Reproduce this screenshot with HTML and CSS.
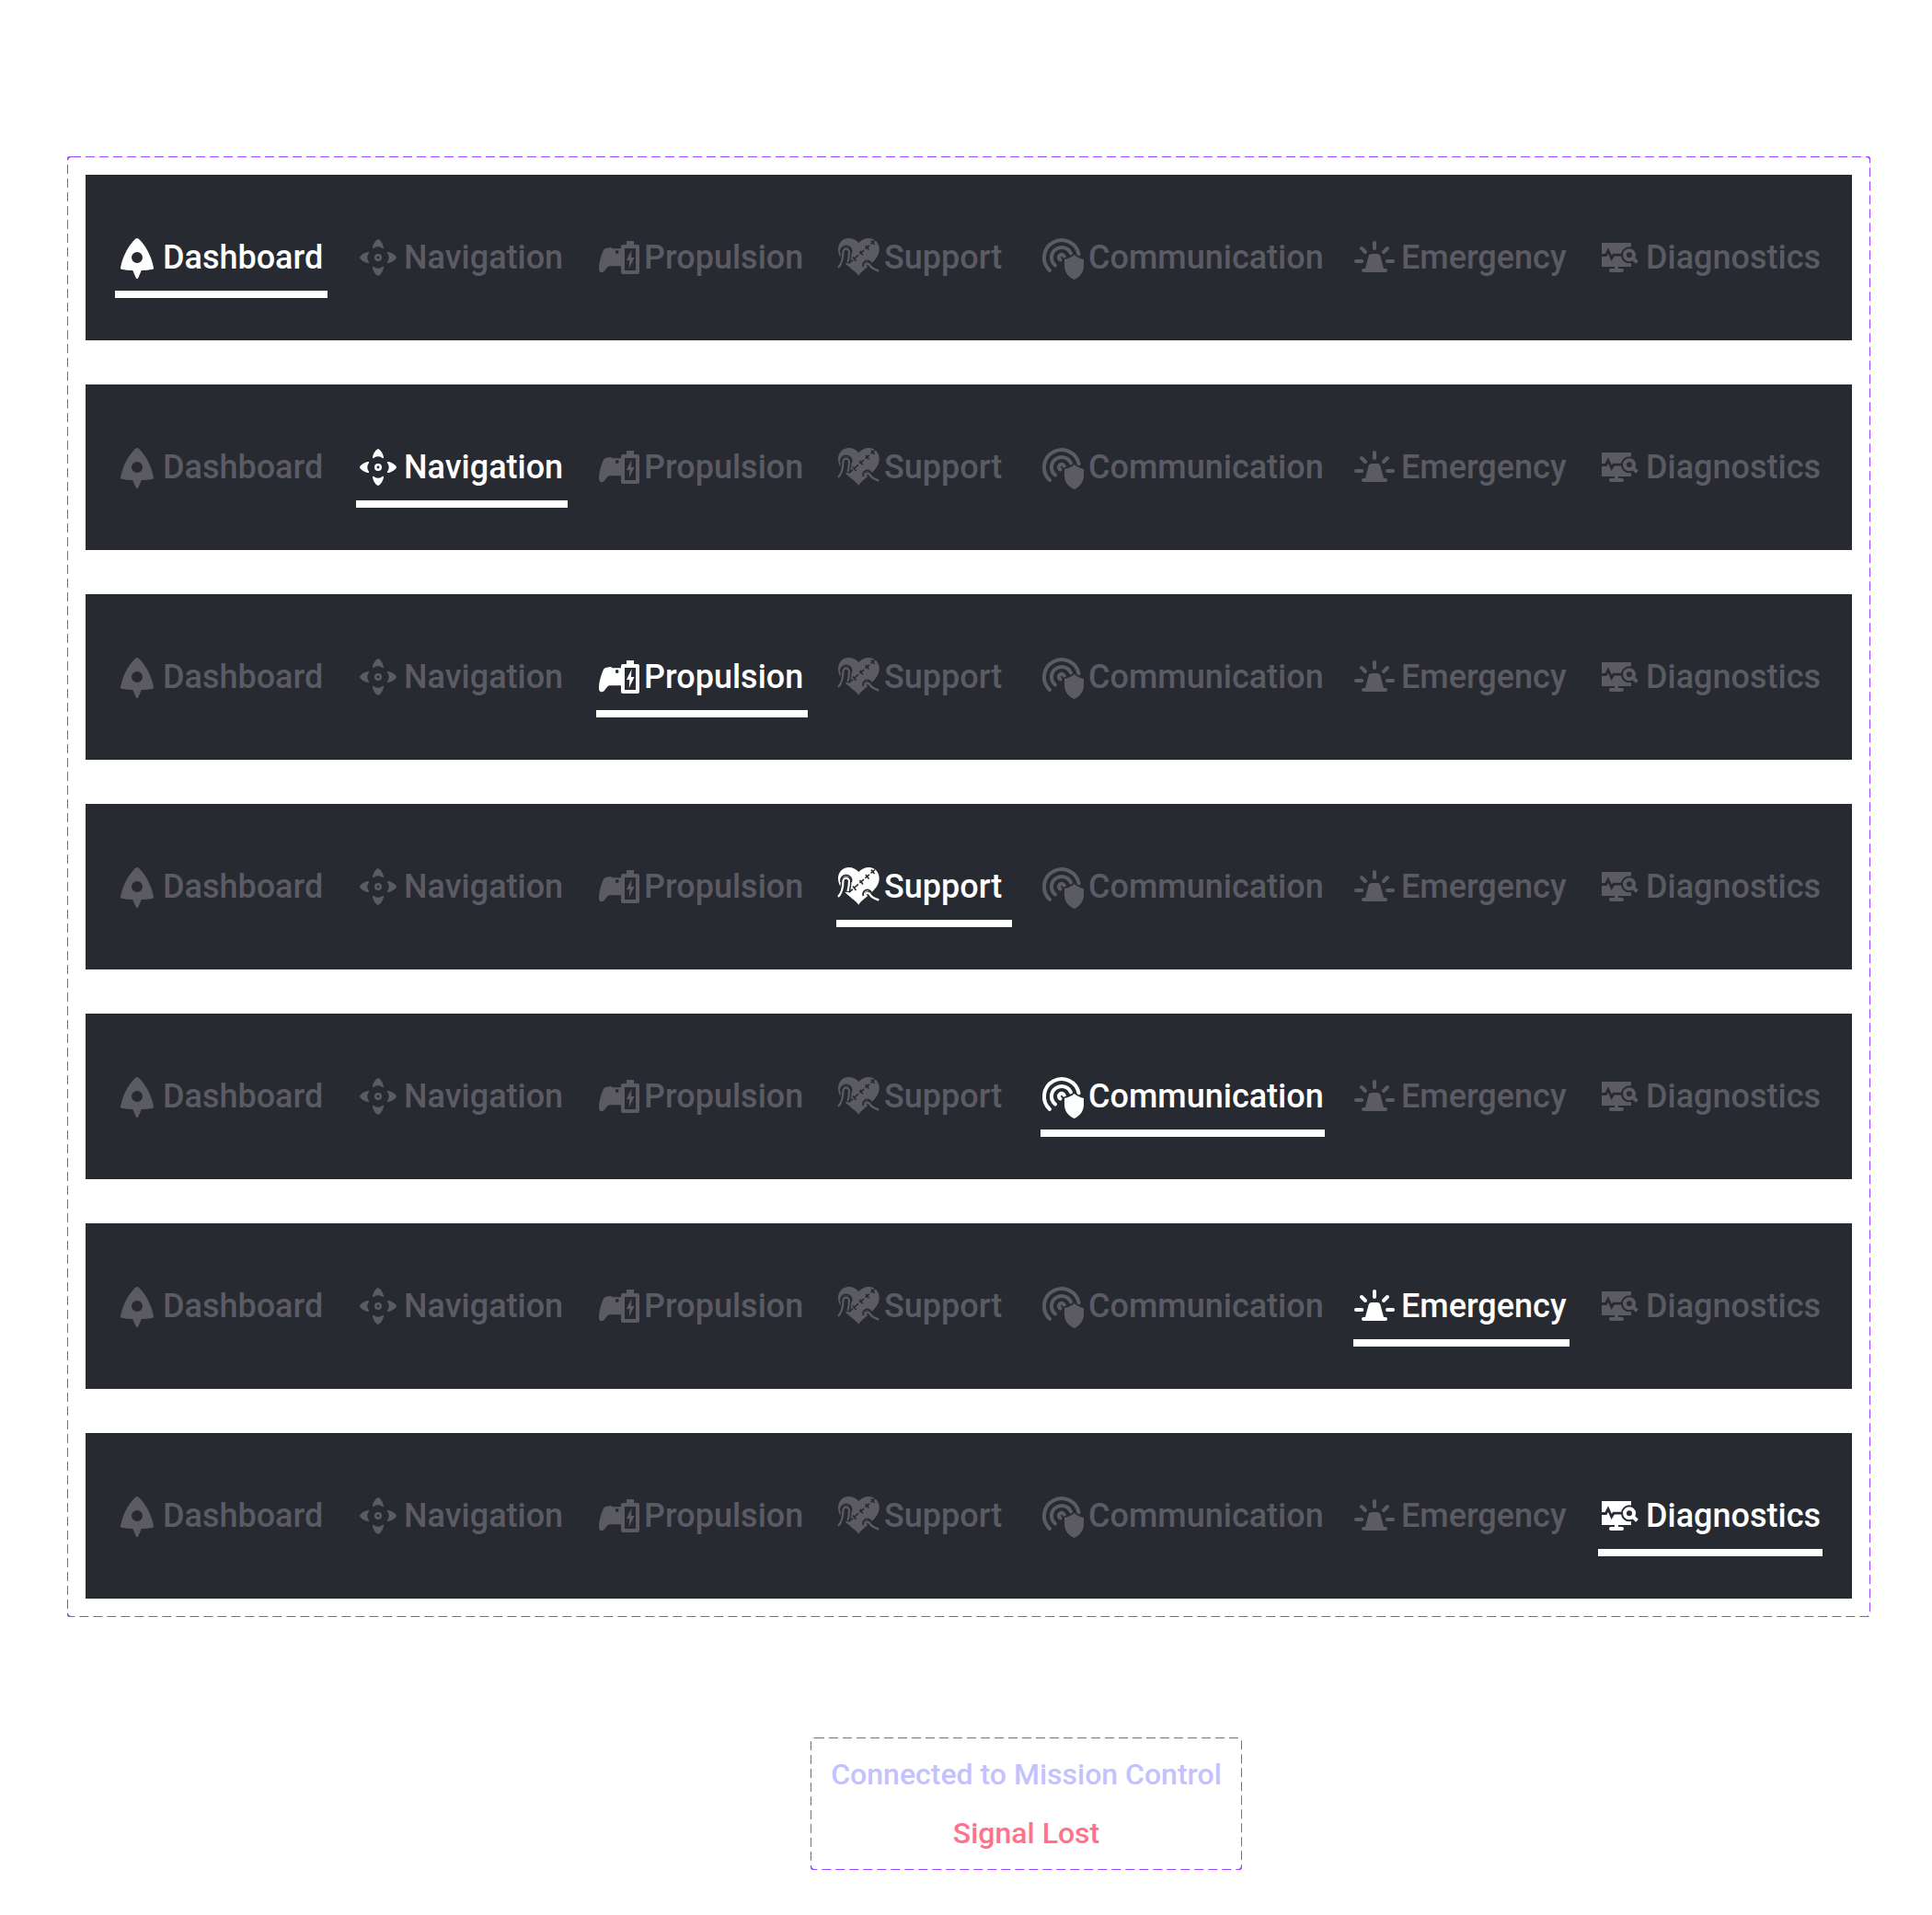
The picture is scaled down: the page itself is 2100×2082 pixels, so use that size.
FILE: index.html
```html
<!DOCTYPE html>
<html lang="en">
<head>
  <meta charset="UTF-8" />
  <meta name="viewport" content="width=device-width, initial-scale=1.0" />
  <title>Mission Control</title>
  <link rel="stylesheet" href="styles.css">
</head>
<body>
  <!-- Icon sprite -->
  <svg class="sprite" aria-hidden="true">
    <symbol id="i-dashboard" viewBox="0 0 48 48">
      <path fill-rule="evenodd" d="M22.5 3.6Q24 2.4 25.5 3.6C33 10.5 39.5 22 42 35.3Q42.2 36.5 41 36.7Q35 37.9 28.7 37.9L25.2 46.2Q24 48 22.8 46.2L19.3 37.9Q13 37.9 7 36.7Q5.8 36.5 6 35.3C8.5 22 15 10.5 22.5 3.6ZM24 18a6 6 0 1 0 0 12a6 6 0 1 0 0-12Z"/>
    </symbol>
    <symbol id="i-navigation" viewBox="0 0 48 48">
      <path id="arrow" d="M24 4C26.5 4.5 29.5 9.5 30 13C30 14.5 29 14.5 28 13.5Q26.5 12.3 24 12.3Q21.5 12.3 20 13.5C19 14.5 18 14.5 18 13C18.5 9.5 21.5 4.5 24 4Z"/>
      <use href="#arrow" transform="rotate(90 24 24)"/>
      <use href="#arrow" transform="rotate(180 24 24)"/>
      <use href="#arrow" transform="rotate(270 24 24)"/>
      <circle class="line" cx="24" cy="24" r="2.7" stroke-width="2.6"/>
    </symbol>
    <symbol id="i-propulsion" viewBox="0 0 48 48">
      <path d="M10 14L15.5 13Q16.5 13 17.5 14.3H27V33.3H15Q13.5 33.3 12.5 34.3L8.5 39.3Q6.5 41 4.5 40Q2.8 39 3 34.5Q3.5 27 7 18Q8 15 10 14Z"/>
      <circle class="cut-fill" cx="22.7" cy="18" r="1.9"/>
      <path fill-rule="evenodd" d="M33 6H41V10H45Q47 10 47 12V40Q47 42 45 42H29Q27 42 27 40V12Q27 10 29 10H33ZM31 14V38H43V14Z"/>
      <path d="M38.5 15.5L33 27H36.3L35.7 36L41.5 24H38Z"/>
    </symbol>
    <symbol id="i-support" viewBox="0 0 48 48">
      <path d="M24.3 43.7C20 37 2 29 2 15C2 8 7 3 13.5 3C18 3 22 5 24.3 8C27 5 31 3 35.5 3C42 3 46.7 8 46.7 15C46.7 28 29 36 24.3 43.7Z"/>
      <!-- stitches -->
      <path class="cut" d="M42 5.5L14 30" stroke-width="1.6" stroke-dasharray="6 2"/>
      <path class="cut" d="M38 5.5L41.5 10M32 11L35.5 15.5M25.5 17L29 21.5M18 23.5L21.5 28" stroke-width="1.6"/>
      <!-- left tube -->
      <path class="cut" d="M1 34C6 29 7.4 22 7.4 18A3.3 3.3 0 0 1 14 18C14 22 13.5 25 12.5 30" stroke-width="5"/>
      <path class="cut" d="M5 19A6 6 0 1 1 16.5 19" stroke-width="1.6"/>
      <path class="cut-fill" d="M8 18A3 3 0 0 1 13.5 18L12 29L4 33Z"/>
      <path class="line" d="M2 35C7 30 7.4 22 7.4 18A3.3 3.3 0 0 1 14 18C14 22 13.5 25 12.5 29" stroke-width="2.2"/>
      <!-- right tube -->
      <path class="cut" d="M29.5 34A4.6 4.6 0 1 1 38 30.5" stroke-width="1.8"/>
      <path class="cut" d="M33 33C34 31.5 36 31.5 37.5 33.5L46.3 38.5" stroke-width="6"/>
      <path class="line" d="M31.5 32.5C33 30 36 30.5 37 33C38 35 41.5 37 46.3 38.5" stroke-width="2.4"/>
    </symbol>
    <symbol id="i-communication" viewBox="0 0 48 48">
      <path class="line round" d="M10 38A19 19 0 1 1 41.6 20.5" stroke-width="4"/>
      <path class="line round" d="M16 32.5A11 11 0 1 1 33 19.5" stroke-width="4"/>
      <path class="line round" d="M21.5 26.5A3 3 0 1 1 25.8 23" stroke-width="4"/>
      <path class="halo" d="M36.7 21C39.5 23.5 43 25 47 26V33C47 40 42.5 45.5 36.7 48C30.5 45.5 26 40 26 33V26C30.5 25 34 23.5 36.7 21Z"/>
    </symbol>
    <symbol id="i-emergency" viewBox="0 0 48 48">
      <path d="M20 20H26Q28.5 20 29.3 22.3L33 36H35Q37 36 37 38T35 40H11Q9 40 9 38T11 36H13L16.7 22.3Q17.5 20 20 20Z"/>
      <path class="line round" d="M23 8V14M3 28H9.3M37 28H43M9 14L13 18M37 14L33 18" stroke-width="4"/>
    </symbol>
    <symbol id="i-diagnostics" viewBox="0 0 48 48">
      <path d="M4 8H36V34H22V36H26Q28 36 28 38T26 40H14Q12 40 12 38T14 36H18V34H4Z"/>
      <path class="cut" d="M4 21.5H8.5L11 16.5L14.7 25L17 21.2H27" stroke-width="2.8"/>
      <circle class="cut-fill" cx="34" cy="21.3" r="9"/>
      <path class="cut" d="M34 21.3L42.5 29.3" stroke-width="7"/>
      <path class="line" d="M38 25L42.5 29.3" stroke-width="4"/>
      <circle class="line" cx="34" cy="21.3" r="5" stroke-width="4"/>
    </symbol>
  </svg>

  <main class="frame nav-states">
    <svg class="outline" aria-hidden="true"><rect rx="5"/></svg>

    <nav class="bar">
      <a class="tab active" href="#dashboard"><svg class="icon"><use href="#i-dashboard"/></svg>Dashboard</a>
      <a class="tab" href="#navigation"><svg class="icon"><use href="#i-navigation"/></svg>Navigation</a>
      <a class="tab" href="#propulsion"><svg class="icon"><use href="#i-propulsion"/></svg>Propulsion</a>
      <a class="tab" href="#support"><svg class="icon"><use href="#i-support"/></svg>Support</a>
      <a class="tab" href="#communication"><svg class="icon"><use href="#i-communication"/></svg>Communication</a>
      <a class="tab" href="#emergency"><svg class="icon"><use href="#i-emergency"/></svg>Emergency</a>
      <a class="tab" href="#diagnostics"><svg class="icon"><use href="#i-diagnostics"/></svg>Diagnostics</a>
    </nav>

    <nav class="bar">
      <a class="tab" href="#dashboard"><svg class="icon"><use href="#i-dashboard"/></svg>Dashboard</a>
      <a class="tab active" href="#navigation"><svg class="icon"><use href="#i-navigation"/></svg>Navigation</a>
      <a class="tab" href="#propulsion"><svg class="icon"><use href="#i-propulsion"/></svg>Propulsion</a>
      <a class="tab" href="#support"><svg class="icon"><use href="#i-support"/></svg>Support</a>
      <a class="tab" href="#communication"><svg class="icon"><use href="#i-communication"/></svg>Communication</a>
      <a class="tab" href="#emergency"><svg class="icon"><use href="#i-emergency"/></svg>Emergency</a>
      <a class="tab" href="#diagnostics"><svg class="icon"><use href="#i-diagnostics"/></svg>Diagnostics</a>
    </nav>

    <nav class="bar">
      <a class="tab" href="#dashboard"><svg class="icon"><use href="#i-dashboard"/></svg>Dashboard</a>
      <a class="tab" href="#navigation"><svg class="icon"><use href="#i-navigation"/></svg>Navigation</a>
      <a class="tab active" href="#propulsion"><svg class="icon"><use href="#i-propulsion"/></svg>Propulsion</a>
      <a class="tab" href="#support"><svg class="icon"><use href="#i-support"/></svg>Support</a>
      <a class="tab" href="#communication"><svg class="icon"><use href="#i-communication"/></svg>Communication</a>
      <a class="tab" href="#emergency"><svg class="icon"><use href="#i-emergency"/></svg>Emergency</a>
      <a class="tab" href="#diagnostics"><svg class="icon"><use href="#i-diagnostics"/></svg>Diagnostics</a>
    </nav>

    <nav class="bar">
      <a class="tab" href="#dashboard"><svg class="icon"><use href="#i-dashboard"/></svg>Dashboard</a>
      <a class="tab" href="#navigation"><svg class="icon"><use href="#i-navigation"/></svg>Navigation</a>
      <a class="tab" href="#propulsion"><svg class="icon"><use href="#i-propulsion"/></svg>Propulsion</a>
      <a class="tab active" href="#support"><svg class="icon"><use href="#i-support"/></svg>Support</a>
      <a class="tab" href="#communication"><svg class="icon"><use href="#i-communication"/></svg>Communication</a>
      <a class="tab" href="#emergency"><svg class="icon"><use href="#i-emergency"/></svg>Emergency</a>
      <a class="tab" href="#diagnostics"><svg class="icon"><use href="#i-diagnostics"/></svg>Diagnostics</a>
    </nav>

    <nav class="bar">
      <a class="tab" href="#dashboard"><svg class="icon"><use href="#i-dashboard"/></svg>Dashboard</a>
      <a class="tab" href="#navigation"><svg class="icon"><use href="#i-navigation"/></svg>Navigation</a>
      <a class="tab" href="#propulsion"><svg class="icon"><use href="#i-propulsion"/></svg>Propulsion</a>
      <a class="tab" href="#support"><svg class="icon"><use href="#i-support"/></svg>Support</a>
      <a class="tab active" href="#communication"><svg class="icon"><use href="#i-communication"/></svg>Communication</a>
      <a class="tab" href="#emergency"><svg class="icon"><use href="#i-emergency"/></svg>Emergency</a>
      <a class="tab" href="#diagnostics"><svg class="icon"><use href="#i-diagnostics"/></svg>Diagnostics</a>
    </nav>

    <nav class="bar">
      <a class="tab" href="#dashboard"><svg class="icon"><use href="#i-dashboard"/></svg>Dashboard</a>
      <a class="tab" href="#navigation"><svg class="icon"><use href="#i-navigation"/></svg>Navigation</a>
      <a class="tab" href="#propulsion"><svg class="icon"><use href="#i-propulsion"/></svg>Propulsion</a>
      <a class="tab" href="#support"><svg class="icon"><use href="#i-support"/></svg>Support</a>
      <a class="tab" href="#communication"><svg class="icon"><use href="#i-communication"/></svg>Communication</a>
      <a class="tab active" href="#emergency"><svg class="icon"><use href="#i-emergency"/></svg>Emergency</a>
      <a class="tab" href="#diagnostics"><svg class="icon"><use href="#i-diagnostics"/></svg>Diagnostics</a>
    </nav>

    <nav class="bar">
      <a class="tab" href="#dashboard"><svg class="icon"><use href="#i-dashboard"/></svg>Dashboard</a>
      <a class="tab" href="#navigation"><svg class="icon"><use href="#i-navigation"/></svg>Navigation</a>
      <a class="tab" href="#propulsion"><svg class="icon"><use href="#i-propulsion"/></svg>Propulsion</a>
      <a class="tab" href="#support"><svg class="icon"><use href="#i-support"/></svg>Support</a>
      <a class="tab" href="#communication"><svg class="icon"><use href="#i-communication"/></svg>Communication</a>
      <a class="tab" href="#emergency"><svg class="icon"><use href="#i-emergency"/></svg>Emergency</a>
      <a class="tab active" href="#diagnostics"><svg class="icon"><use href="#i-diagnostics"/></svg>Diagnostics</a>
    </nav>
  </main>

  <section class="frame signal-states">
    <svg class="outline" aria-hidden="true"><rect rx="5"/></svg>
    <p class="signal connected">Connected to Mission Control</p>
    <p class="signal lost">Signal Lost</p>
  </section>
</body>
</html>
```
FILE: styles.css
```css
:root {
  --bar: #272a31;
  --muted: #5c5b64;
  --active: #ffffff;
  --frame: #9747ff;
  --connected: #c4c1ff;
  --lost: #ff728c;
}
* { box-sizing: border-box; margin: 0; padding: 0; }
body {
  background: #fff;
  font-family: Roboto, "Liberation Sans", sans-serif;
  font-weight: 500;
  padding: 170px 67px 49px 73px;
}
.sprite { position: absolute; width: 0; height: 0; }

/* dashed frame around each set of states */
.frame { position: relative; padding: 20px; }
.outline { position: absolute; inset: 0; width: 100%; height: 100%; pointer-events: none; }
.outline rect {
  x: 0; y: 0;
  width: 100%; height: 100%;
  fill: none;
  stroke: var(--frame);
  stroke-width: 2px;
  stroke-dasharray: 10 5;
}

.nav-states { display: flex; flex-direction: column; gap: 48px; }
.bar {
  display: grid;
  grid-template-columns: 231fr 230fr 230fr 191fr 309fr 235fr 244fr;
  column-gap: 31px;
  align-items: center;
  height: 180px;
  padding: 0 32px;
  background: var(--bar);
}
.tab {
  display: flex;
  align-items: center;
  gap: 4px;
  height: 88px;
  border-top: 8px solid transparent;
  border-bottom: 8px solid transparent;
  color: var(--muted);
  font-size: 36px;
  line-height: 44px;
  text-decoration: none;
  white-space: nowrap;
}
.tab.active { color: var(--active); border-bottom-color: var(--active); }

.icon { flex: none; width: 48px; height: 48px; fill: currentColor; }
.line { fill: none; stroke: currentColor; }
.round { stroke-linecap: round; }
.cut { fill: none; stroke: var(--bar); }
.cut-fill { fill: var(--bar); }
.halo { stroke: var(--bar); stroke-width: 3; paint-order: stroke; }

.signal-states {
  display: flex;
  flex-direction: column;
  align-items: center;
  gap: 24px;
  width: fit-content;
  min-width: 469px;
  margin: 131px 0 0 808px;
}
.signal { font-size: 32px; line-height: 40px; white-space: nowrap; }
.connected { color: var(--connected); }
.lost { color: var(--lost); }
```
